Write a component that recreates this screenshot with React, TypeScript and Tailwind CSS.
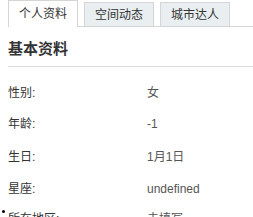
import React from "react";

const font = { fontFamily: '"Liberation Sans", "Noto Sans CJK SC", sans-serif' };

function Row({ label, value, h, dot }: { label: string; value: string; h: string; dot?: boolean }) {
  return (
    <div className={`flex items-center ${h} text-[12px] relative`}>
      {dot && <span className="absolute left-[-6px] top-[6px] w-[3px] h-[3px] rounded-full bg-black" />}
      <div className="w-[139px] text-[#333]">{label}</div>
      <div className="text-[#555]">{value}</div>
    </div>
  );
}

export default function App() {
  return (
    <div className="w-[253px] h-[217px] overflow-hidden bg-white" style={font}>
      <div className="ml-2 flex items-end gap-[6px] border-b border-[#d5d5d5] h-[27px]">
        <div className="w-[70px] h-[27px] -mb-px bg-white border border-b-0 border-[#d5d5d5] flex items-center justify-center text-[12px] text-[#333]">
          个人资料
        </div>
        <div className="w-[70px] h-[24px] bg-[#e9eef0] border border-b-0 border-[#d5d5d5] flex items-center justify-center text-[12px] text-[#333]">
          空间动态
        </div>
        <div className="w-[70px] h-[24px] bg-[#e9eef0] border border-b-0 border-[#d5d5d5] flex items-center justify-center text-[12px] text-[#333]">
          城市达人
        </div>
      </div>
      <div className="ml-2">
        <div className="h-[40px] flex items-end pb-[7px] border-b border-[#dcdcdc] text-[15px] font-bold text-[#333] leading-[20px]">
          基本资料
        </div>
        <div className="mt-[11px]">
          <Row label="性别:" value="女" h="h-[30px]" />
          <Row label="年龄:" value="-1" h="h-[32px]" />
          <Row label="生日:" value="1月1日" h="h-[34px]" />
          <Row label="星座:" value="undefined" h="h-[30px]" />
          <Row label="所在地区:" value="未填写" h="h-[30px]" dot />
        </div>
      </div>
    </div>
  );
}
